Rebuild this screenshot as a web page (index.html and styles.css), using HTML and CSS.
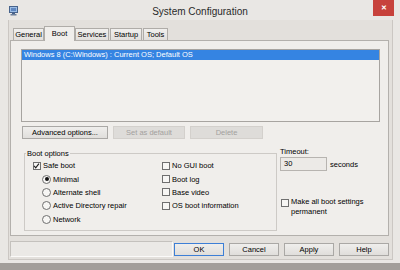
FILE: index.html
```html
<!DOCTYPE html>
<html lang="en">
<head>
  <meta charset="UTF-8" />
  <title>System Configuration</title>
  <link rel="stylesheet" href="styles.css">
</head>
<body>
  <div class="window">
    <div class="titlebar">
      <svg class="app-icon" width="9" height="10" viewBox="0 0 9 10">
        <rect x="0.5" y="0.5" width="8" height="6" fill="#9cbde4" stroke="#47638c" />
        <rect x="2" y="2" width="5" height="3" fill="#5f87c0" />
        <rect x="3" y="7" width="3" height="1" fill="#47638c" />
        <rect x="1.5" y="8" width="6" height="1.5" fill="#6d7f99" />
      </svg>
      <div class="title">System Configuration</div>
      <div class="close">&#x2715;</div>
    </div>

    <div class="client">
      <div class="tabs">
        <div class="tab tab-general">General</div>
        <div class="tab tab-boot active">Boot</div>
        <div class="tab tab-services">Services</div>
        <div class="tab tab-startup">Startup</div>
        <div class="tab tab-tools">Tools</div>
      </div>

      <div class="panel">
        <div class="listbox">
          <div class="list-item selected">Windows 8 (C:\Windows) : Current OS; Default OS</div>
        </div>

        <div class="list-buttons">
          <button class="btn btn-advanced">Advanced options...</button>
          <button class="btn btn-default" disabled>Set as default</button>
          <button class="btn btn-delete" disabled>Delete</button>
        </div>

        <div class="lower">
          <fieldset class="group">
            <legend>Boot options</legend>
            <div class="group-cols">
              <div class="col">
                <div class="row"><span class="check checked"><svg width="8" height="8" viewBox="0 0 8 8"><path d="M1.3 3.9 L3.1 6.1 L6.8 1.2" fill="none" stroke="#1e1e1e" stroke-width="1.3" /></svg></span>Safe boot</div>
                <div class="row indent"><span class="radio on"></span>Minimal</div>
                <div class="row indent"><span class="radio"></span>Alternate shell</div>
                <div class="row indent"><span class="radio"></span>Active Directory repair</div>
                <div class="row indent"><span class="radio"></span>Network</div>
              </div>
              <div class="col">
                <div class="row"><span class="check"></span>No GUI boot</div>
                <div class="row"><span class="check"></span>Boot log</div>
                <div class="row"><span class="check"></span>Base video</div>
                <div class="row"><span class="check"></span>OS boot information</div>
              </div>
            </div>
          </fieldset>

          <div class="timeout">
            <div class="timeout-label">Timeout:</div>
            <div class="timeout-row">
              <div class="input">30</div>
              <span class="unit">seconds</span>
            </div>
            <div class="permanent">
              <span class="check"></span>
              <span class="permanent-text">Make all boot settings<br>permanent</span>
            </div>
          </div>
        </div>
      </div>

      <div class="footer">
        <div class="status"></div>
        <button class="btn btn-foot btn-ok">OK</button>
        <button class="btn btn-foot">Cancel</button>
        <button class="btn btn-foot">Apply</button>
        <button class="btn btn-foot">Help</button>
      </div>
    </div>
  </div>
</body>
</html>
```

FILE: styles.css
```css
* {
  box-sizing: border-box;
}

body {
  margin: 0;
  width: 400px;
  height: 270px;
  overflow: hidden;
  background: #a29e9a;
  font-family: "Liberation Sans", Arial, sans-serif;
  font-size: 7.5px;
  line-height: 9px;
  color: #000;
}

.window {
  height: 263px;
  background: #e9e7e4;
  display: flex;
  flex-direction: column;
}

/* title bar */
.titlebar {
  height: 20px;
  flex: none;
  display: grid;
  grid-template-columns: 1fr auto 1fr;
  align-items: start;
}

.app-icon {
  display: block;
  margin: 6px 0 0 9px;
}

.title {
  font-size: 10px;
  line-height: 12px;
  color: #2a2a2a;
  padding-top: 6px;
}

.close {
  justify-self: end;
  width: 21px;
  height: 16px;
  margin-right: 6px;
  background: #c7423c;
  color: #fff;
  font-size: 7px;
  line-height: 16px;
  text-align: center;
  font-weight: bold;
}

/* dialog body */
.client {
  flex: 1;
  margin: 0 7px 3px 8px;
  background: #e3e0dc;
  border: 1px solid #cbc7c3;
  border-top: none;
  padding: 5px 3px 0 1px;
  display: flex;
  flex-direction: column;
}

.tabs {
  height: 16px;
  flex: none;
  margin-bottom: -1px;
  padding-left: 3px;
  display: flex;
  align-items: flex-end;
}

.tab {
  height: 13px;
  border: 1px solid #afaca8;
  border-bottom: none;
  background: linear-gradient(#f1f0ee, #e0ddda);
  text-align: center;
  line-height: 12px;
}

.tab.active {
  position: relative;
  height: 15px;
  background: #f0eeeb;
  line-height: 13px;
}

.tab-general { width: 31px; }
.tab-boot { width: 31px; }
.tab-services { width: 34px; }
.tab-startup { width: 32px; margin-left: 1px; }
.tab-tools { width: 25px; margin-left: 1px; }

.panel {
  height: 196px;
  flex: none;
  border: 1px solid #b3b0ac;
  background: #f0eeeb;
  padding: 8px 8px 0 10px;
}

.listbox {
  height: 73px;
  border: 1px solid #a7a4a0;
  background: #f2f0ed;
  padding: 0 0 0 0;
}

.list-item {
  height: 10px;
  line-height: 10px;
  padding-left: 2px;
}

.list-item.selected {
  background: #3584e2;
  color: #fff;
}

/* buttons */
.btn {
  appearance: none;
  margin: 0;
  padding: 0;
  height: 13px;
  border: 1px solid #aaa8a5;
  background: linear-gradient(#efeeec, #e0dedb);
  font-family: inherit;
  font-size: 7.5px;
  line-height: 11px;
  color: #000;
  text-align: center;
}

.btn:disabled {
  border-color: #d3d0cc;
  background: #dedcd9;
  color: #a3a19e;
}

.list-buttons {
  margin-top: 4px;
  padding-left: 1px;
  display: flex;
  gap: 5px;
}

.btn-advanced { width: 86px; }
.btn-default { width: 72px; }
.btn-delete { width: 73px; }

/* boot options */
.lower {
  margin-top: 9.5px;
  display: flex;
}

.group {
  margin: 0 0 0 3px;
  width: 253px;
  height: 82.5px;
  border: 1px solid #cdcac6;
  padding: 1.5px 0 0 8px;
}

.group legend {
  margin-left: -7px;
  padding: 0 1px;
  line-height: 9px;
}

.group-cols {
  display: grid;
  grid-template-columns: 129px 1fr;
}

.row {
  height: 13.4px;
  display: flex;
  align-items: center;
  white-space: nowrap;
}

.row.indent {
  padding-left: 9px;
}

.check {
  width: 8px;
  height: 8px;
  flex: none;
  margin-right: 2px;
  border: 1px solid #6f6f6f;
  background: #f7f6f4;
  display: flex;
}

.check svg {
  margin: -1px 0 0 -1px;
}

.radio {
  width: 9px;
  height: 9px;
  flex: none;
  margin-right: 2px;
  border: 1px solid #6f6f6f;
  border-radius: 50%;
  background: #f7f6f4;
  display: flex;
  align-items: center;
  justify-content: center;
}

.radio.on::after {
  content: "";
  width: 4px;
  height: 4px;
  border-radius: 50%;
  background: #111;
}

.timeout {
  margin: -2px 0 0 3px;
}

.timeout-row {
  margin-top: 1.5px;
  display: flex;
  align-items: center;
}

.input {
  width: 47px;
  height: 14px;
  border: 1px solid #b7b4b0;
  background: #eceae7;
  padding-left: 3px;
  line-height: 12px;
}

.unit {
  margin-left: 3px;
}

.permanent {
  margin: 27px 0 0 1px;
  display: flex;
  align-items: flex-start;
}

.permanent .check {
  margin-top: 1px;
}

.permanent-text {
  line-height: 10px;
  margin-top: -1px;
}

/* footer */
.footer {
  margin-top: 5px;
  display: flex;
  align-items: center;
  gap: 5px;
}

.status {
  width: 163px;
  height: 16px;
  margin-right: -4px;
  border: 1px solid;
  border-color: #c4c1bd #fbfaf9 #fbfaf9 #c4c1bd;
  background: #ebe9e6;
}

.btn-foot {
  width: 50px;
}

.btn-ok {
  border-color: #3d7fd6;
}
```
